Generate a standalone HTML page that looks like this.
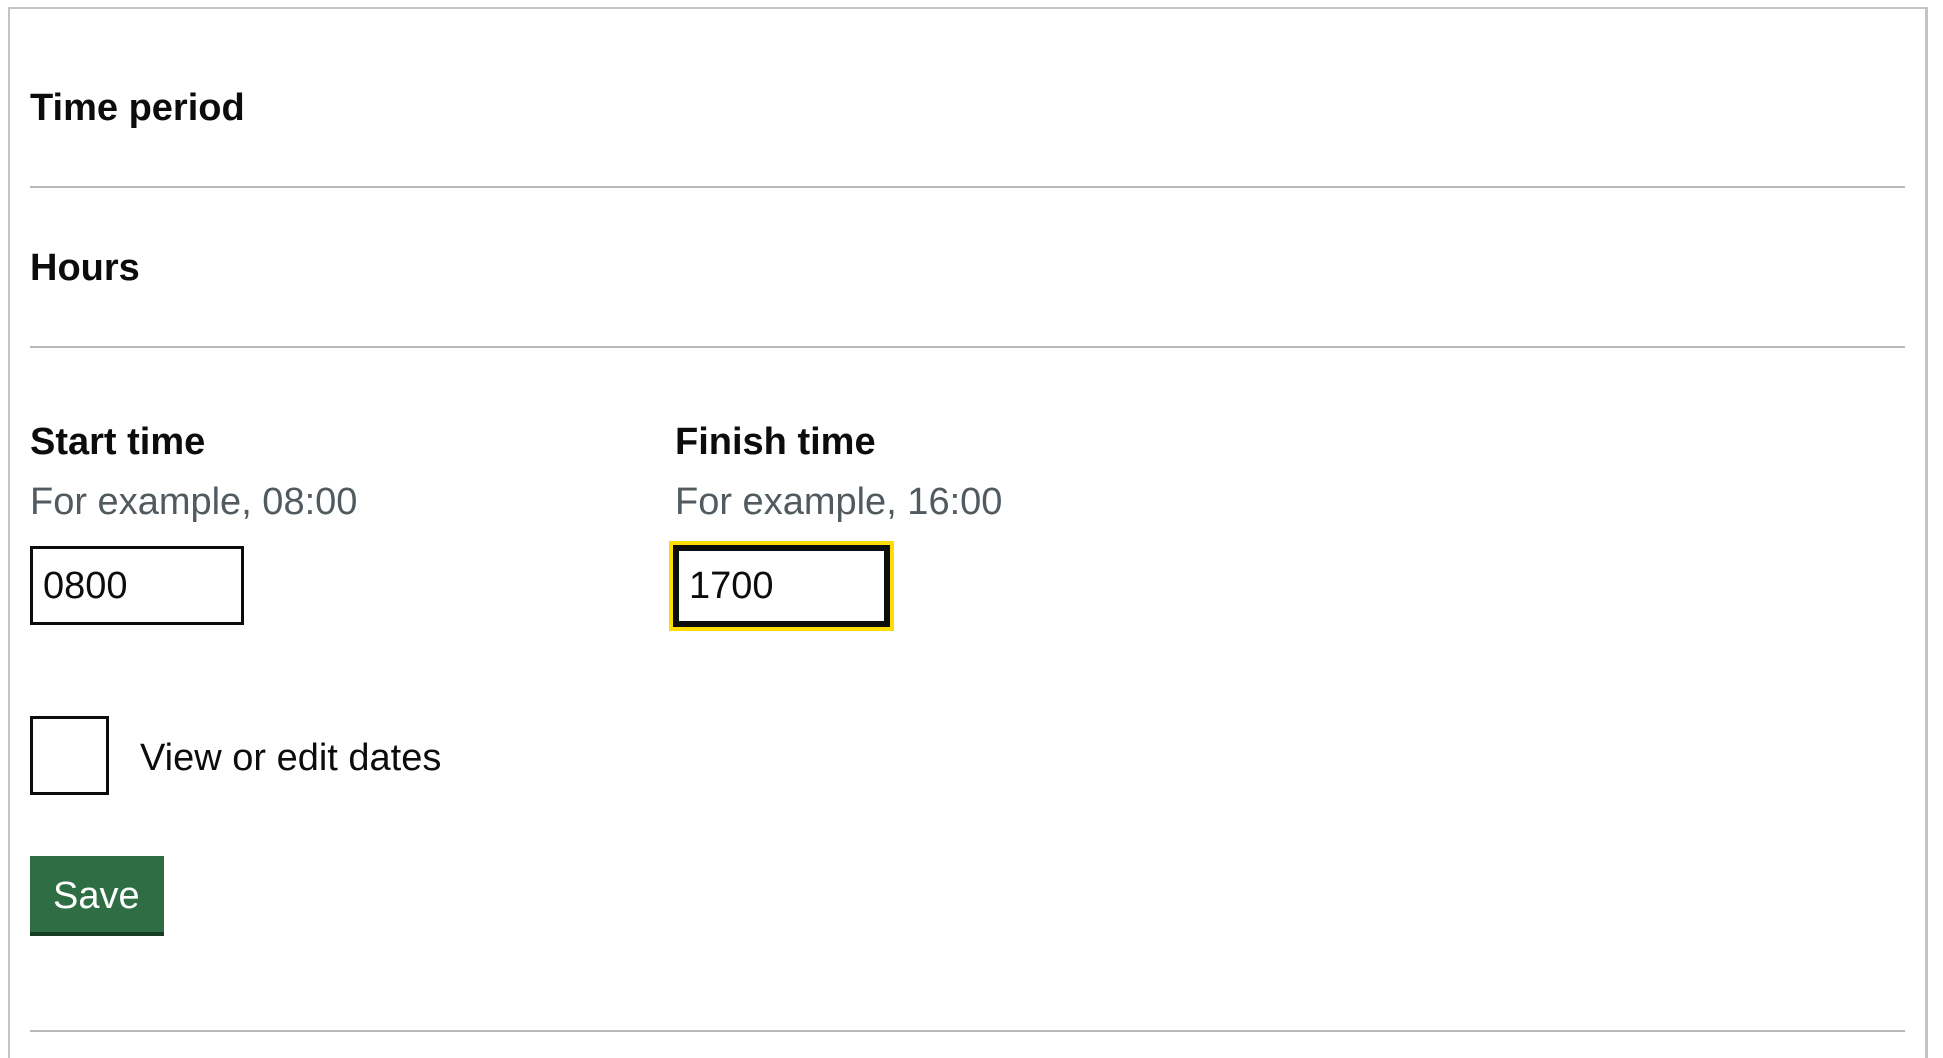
<!DOCTYPE html>
<html><head><style>
html,body{margin:0;padding:0;background:#fff;width:1943px;height:1058px;overflow:hidden;font-family:"Liberation Sans",Arial,sans-serif;}
.frame{position:absolute;left:8px;top:7px;width:1915px;height:1049px;border-top:2px solid #c4c4c4;border-left:2px solid #c4c4c4;border-right:3px solid #c4c4c4;}
.t{position:absolute;white-space:nowrap;line-height:1;}
.b{font-weight:bold;color:#0b0c0c;font-size:38px;}
.g{color:#505a5f;font-size:38px;}
.hr{position:absolute;left:30px;width:1875px;height:2px;background:#b8b8b8;}
.in{position:absolute;box-sizing:border-box;font-size:38px;color:#0b0c0c;line-height:1;}
</style></head><body>
<div class="frame"></div>
<div class="t b" style="left:30px;top:89px;">Time period</div>
<div class="hr" style="top:186px"></div>
<div class="t b" style="left:30px;top:249px;">Hours</div>
<div class="hr" style="top:346px"></div>
<div class="t b" style="left:30px;top:423px;">Start time</div>
<div class="t g" style="left:30px;top:483px;">For example, 08:00</div>
<div class="t b" style="left:675px;top:423px;">Finish time</div>
<div class="t g" style="left:675px;top:483px;">For example, 16:00</div>
<div class="in" style="left:30px;top:546px;width:214px;height:79px;border:3px solid #0b0c0c;padding:18px 0 0 10px;">0800</div>
<div class="in" style="left:669px;top:541px;width:225px;height:90px;border:4px solid #ffdd00;"></div>
<div class="in" style="left:673px;top:545px;width:217px;height:82px;border:6px solid #0b0c0c;padding:16px 0 0 10px;">1700</div>
<div class="in" style="left:30px;top:716px;width:79px;height:79px;border:3px solid #0b0c0c;"></div>
<div class="t" style="left:140px;top:739px;font-size:38px;color:#0b0c0c;">View or edit dates</div>
<div style="position:absolute;left:30px;top:856px;width:134px;height:76px;background:#2f6e45;border-bottom:4px solid #163d23;"></div>
<div class="t" style="left:53px;top:877px;font-size:38px;color:#fff;">Save</div>
<div class="hr" style="top:1030px"></div>
</body></html>
